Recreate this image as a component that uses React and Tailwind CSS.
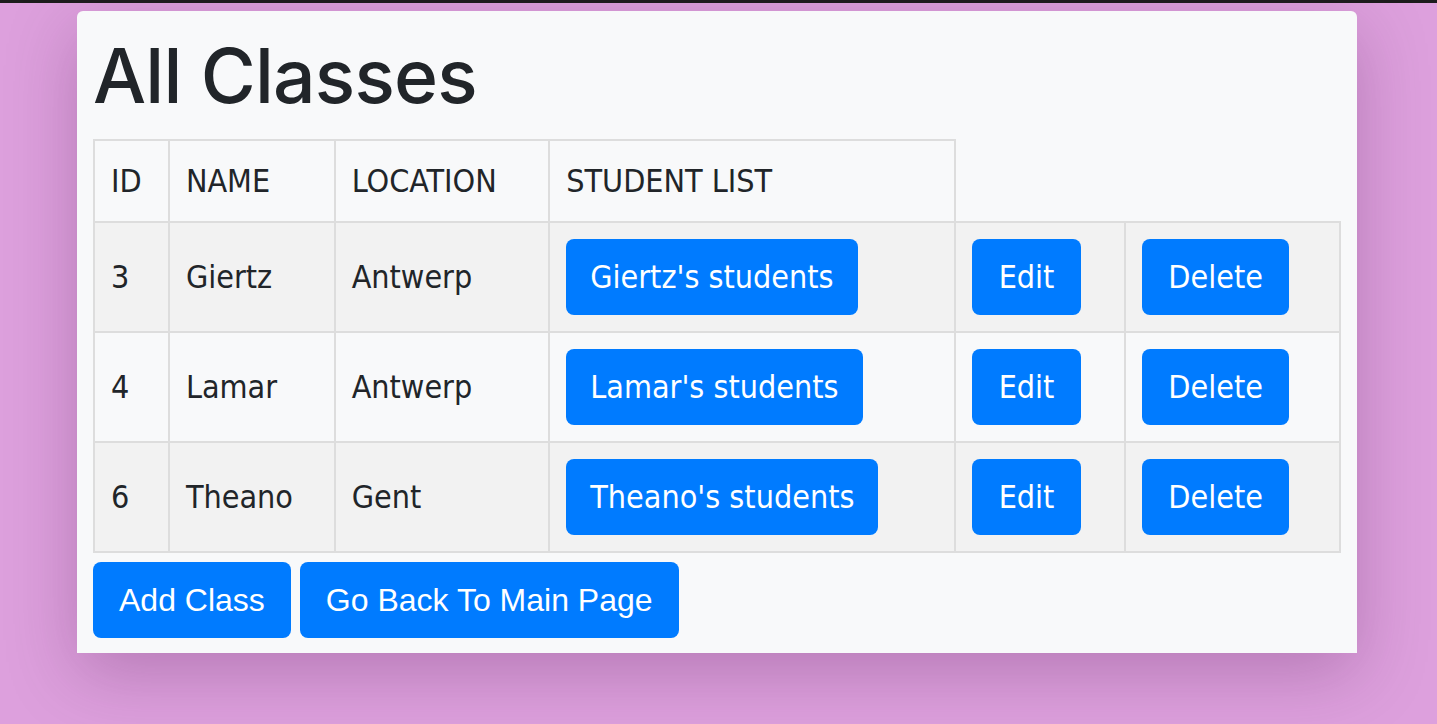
export default function App() {
  const rows = [
    { id: 3, name: "Giertz", loc: "Antwerp", list: "Giertz's students", striped: true },
    { id: 4, name: "Lamar", loc: "Antwerp", list: "Lamar's students", striped: false },
    { id: 6, name: "Theano", loc: "Gent", list: "Theano's students", striped: true },
  ];
  const tf = { fontFamily: '"DejaVu Sans Condensed", "DejaVu Sans", sans-serif', fontStretch: "semi-condensed" };
  const btn =
    "inline-block bg-[#007bff] text-white rounded-[8px] h-[76px] text-[32px] leading-[48px] py-[14px] whitespace-nowrap";
  const cell = "border-2 border-[#dddddd] px-[16px] py-[16px] align-middle text-left font-normal";
  return (
    <div className="w-[1437px] h-[724px] overflow-hidden bg-[#dda0dd] flex flex-col">
      <div className="h-[3px] bg-[#1c1c1c] shrink-0" />
      <div className="pl-[77px] pt-[8px]">
        <div className="w-[1280px] bg-[#f8f9fa] rounded-t-[6px] px-[16px] pt-[16px] pb-[15px] shadow-[0_20px_70px_rgba(80,20,80,0.28)]">
          <h1
            className="text-[75px] leading-[96px] mb-[16px] text-[#212529] font-medium tracking-[-0.8px] pt-[1px]"
            style={{ fontFamily: 'Inter, "Liberation Sans", sans-serif' }}
          >
            All Classes
          </h1>
          <table className="border-collapse text-[32px] leading-[48px] text-[#212529] w-[1248px] -mt-[1px]" style={tf}>
            <colgroup>
              <col className="w-[75px]" />
              <col className="w-[166px]" />
              <col className="w-[215px]" />
              <col className="w-[406px]" />
              <col className="w-[171px]" />
              <col className="w-[215px]" />
            </colgroup>
            <thead>
              <tr>
                <th className={cell}>ID</th>
                <th className={cell}>NAME</th>
                <th className={cell}>LOCATION</th>
                <th className={cell}>STUDENT LIST</th>
              </tr>
            </thead>
            <tbody>
              {rows.map((r) => (
                <tr key={r.id} className={r.striped ? "bg-[#f2f2f2]" : ""}>
                  <td className={cell}>{r.id}</td>
                  <td className={cell}>{r.name}</td>
                  <td className={cell}>{r.loc}</td>
                  <td className={cell}>
                    <span className={btn + " px-[24px]"}>{r.list}</span>
                  </td>
                  <td className={cell}>
                    <span className={btn + " px-[27px]"}>Edit</span>
                  </td>
                  <td className={cell}>
                    <span className={btn + " px-[26px]"}>Delete</span>
                  </td>
                </tr>
              ))}
            </tbody>
          </table>
          <div className="flex gap-[9px] mt-[9px]" style={{ fontFamily: '"Liberation Sans", Arial, sans-serif' }}>
            <span className={btn + " px-[26px]"}>Add Class</span>
            <span className={btn + " px-[26px]"}>Go Back To Main Page</span>
          </div>
        </div>
      </div>
    </div>
  );
}
